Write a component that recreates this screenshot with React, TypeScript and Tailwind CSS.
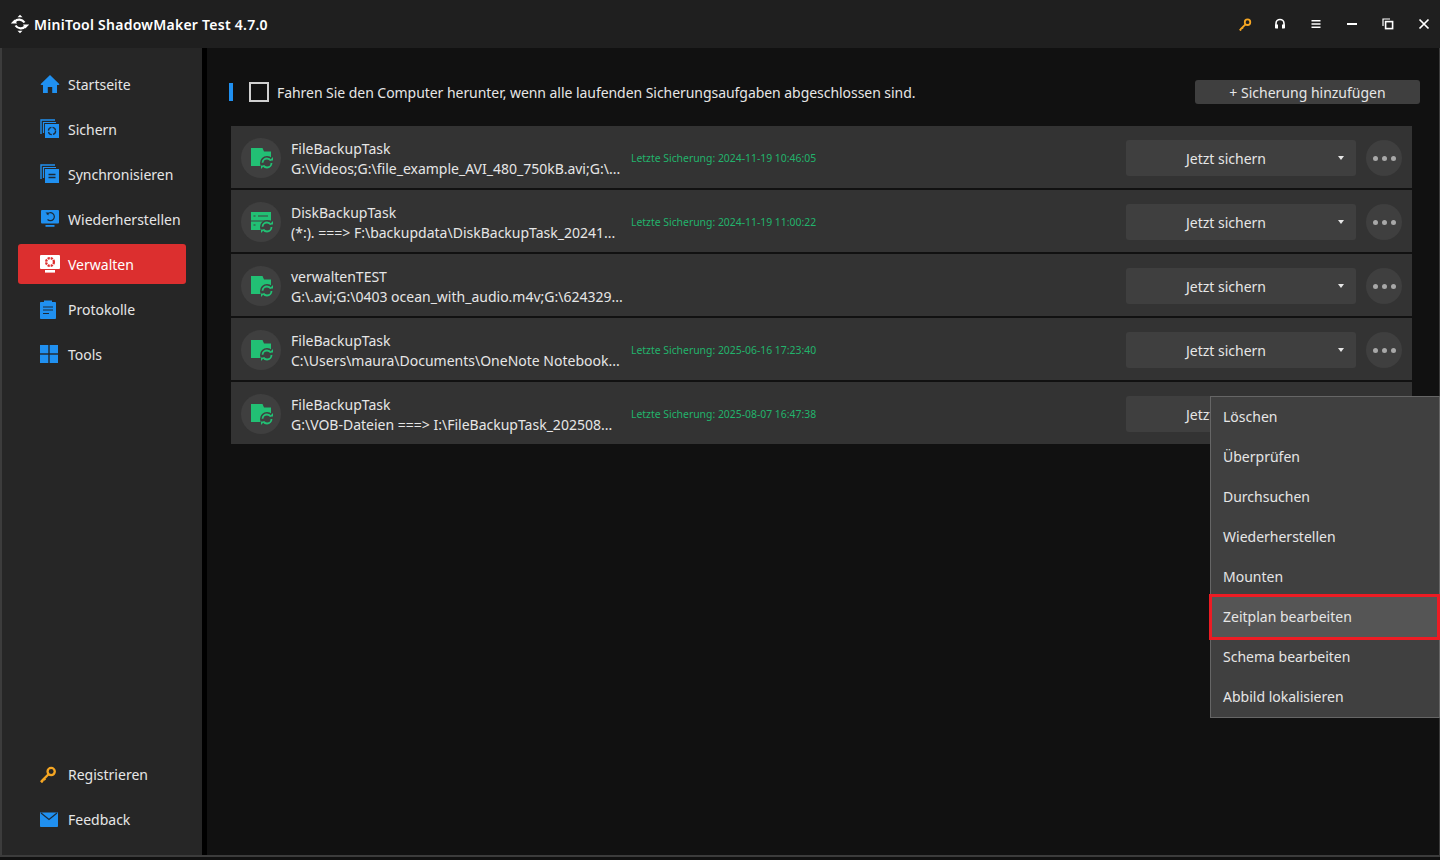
import type { ReactNode } from "react";

const Blue = "#2090f0";
const Green = "#22c074";

const Logo = () => (
  <svg width="20" height="20" viewBox="0 0 20 20" fill="none">
    <path d="M7.5 3.2L10 .8L12.5 3.2Z" fill="#fff" />
    <path d="M7.5 16.8L10 19.2L12.5 16.8Z" fill="#fff" />
    <path d="M5 7.5C7 4.8 12 4.8 14.5 8.5" stroke="#fff" strokeWidth="2.2" />
    <path d="M15 12.5C13 15.2 8 15.2 5.5 11.5" stroke="#fff" strokeWidth="2.2" />
    <path d="M.8 9.6L4.6 5.4L7 9.6Z" fill="#fff" />
    <path d="M19.2 10.4L15.4 14.6L13 10.4Z" fill="#fff" />
  </svg>
);

const HomeIcon = () => (
  <svg width="20" height="20" viewBox="0 0 20 20">
    <path d="M10 1L19.5 10.2L18.6 11H17V19H12.2V13H7.8V19H3V11H1.4L.5 10.2Z" fill={Blue} />
  </svg>
);

const StackIcon = ({ children }: { children: ReactNode }) => (
  <svg width="20" height="20" viewBox="0 0 20 20" fill="none">
    <path d="M1 15V1H15" stroke={Blue} strokeWidth="1.4" />
    <path d="M3.5 14V3.5H16" stroke={Blue} strokeWidth="1.2" />
    <rect x="5" y="5" width="14" height="14" fill={Blue} />
    {children}
  </svg>
);

const RestoreIcon = () => (
  <svg width="20" height="20" viewBox="0 0 20 20" fill="none">
    <rect x="1" y="1" width="18" height="13.5" rx="1" fill={Blue} />
    <rect x="5.5" y="16" width="9" height="1.8" fill={Blue} />
    <path d="M7 5.5A4 4 0 1 1 7.5 10.5" stroke="#1c2a38" strokeWidth="1.2" />
    <path d="M5.5 3.5H8.5V6.5Z" fill="#1c2a38" />
  </svg>
);

const ManageIcon = () => (
  <svg width="22" height="20" viewBox="0 0 22 20" fill="none">
    <rect x="1" y="1" width="20" height="14" rx="1" fill="#fff" />
    <rect x="6" y="16" width="10" height="2.6" fill="#fff" />
    <circle cx="11" cy="8" r="3.9" stroke="#dc2f2f" strokeWidth="2.3" strokeDasharray="2.2 0.9" />
  </svg>
);

const LogIcon = () => (
  <svg width="16" height="19" viewBox="0 0 16 19" fill="none">
    <path d="M1 2H4V0.5H12V2H15C15.5 2 16 2.4 16 3V18C16 18.6 15.5 19 15 19H1C.5 19 0 18.6 0 18V3C0 2.4.5 2 1 2Z" fill={Blue} />
    <path d="M3 7H13M3 10H13M3 13.5H9" stroke="#1c2a38" strokeWidth="1.1" />
  </svg>
);

const ToolsIcon = () => (
  <svg width="18" height="18" viewBox="0 0 18 18">
    <rect width="8.3" height="8.3" fill={Blue} />
    <rect x="9.7" width="8.3" height="8.3" fill={Blue} />
    <rect y="9.7" width="8.3" height="8.3" fill={Blue} />
    <rect x="9.7" y="9.7" width="8.3" height="8.3" fill={Blue} />
  </svg>
);

const KeyIcon = ({ size = 16 }: { size?: number }) => (
  <svg width={size} height={size} viewBox="0 0 16 16" fill="none">
    <circle cx="10.5" cy="5.2" r="3.4" stroke="#f5a623" strokeWidth="2.2" />
    <path d="M8 7.8L2 13.8M2.6 15.4L.8 13.6M5 13.2L3.4 11.6" stroke="#f5a623" strokeWidth="2.2" />
  </svg>
);

const MailIcon = () => (
  <svg width="18" height="15" viewBox="0 0 18 15">
    <path d="M0 .5H18V14C18 14.5 17.6 15 17 15H1C.4 15 0 14.5 0 14Z" fill={Blue} />
    <path d="M1 1L9 7.5L17 1" stroke="#1c2a38" strokeWidth="1.2" fill="none" />
  </svg>
);

const SyncBadge = () => (
  <>
    <circle cx="16" cy="15" r="7" fill="#3f3f3f" />
    <circle cx="16" cy="15" r="4.5" stroke={Green} strokeWidth="1.8" strokeDasharray="11 3.1" fill="none" />
    <path d="M18.6 12.4H22V9Z" fill={Green} />
    <path d="M13.4 17.6H10V21Z" fill={Green} />
  </>
);

const FolderIcon = () => (
  <svg width="24" height="22" viewBox="0 0 24 22">
    <path d="M0 0H11.5L13 3.5H20V18H0Z" fill={Green} />
    <SyncBadge />
  </svg>
);

const DiskIcon = () => (
  <svg width="24" height="22" viewBox="0 0 24 22">
    <rect y="0" width="20" height="8.5" fill={Green} />
    <rect y="9.5" width="20" height="8.5" fill={Green} />
    <path d="M7 4H17M2.5 4H4.5M2.5 13H4.5" stroke="#3f3f3f" strokeWidth="1" />
    <SyncBadge />
  </svg>
);

const WinIcons = () => (
  <div className="flex items-center gap-[20px] pr-[8px]">
    <KeyIcon size={13} />
    <svg width="16" height="16" viewBox="0 0 16 16" fill="none">
      <path d="M4 9V7.5A4 4 0 0 1 12 7.5V9" stroke="#fff" strokeWidth="1.6" />
      <path d="M3 8.5H6V12.5H4C3.4 12.5 3 12.1 3 11.5ZM13 8.5H10V12.5H12C12.6 12.5 13 12.1 13 11.5Z" fill="#fff" />
    </svg>
    <svg width="16" height="16" viewBox="0 0 16 16">
      <path d="M3.5 4H12.5V5.6H3.5ZM3.5 7.2H12.5V8.8H3.5ZM3.5 10.4H12.5V12H3.5Z" fill="#fff" />
    </svg>
    <svg width="16" height="16" viewBox="0 0 16 16">
      <rect x="3" y="7" width="10" height="2" fill="#fff" />
    </svg>
    <svg width="16" height="16" viewBox="0 0 16 16" fill="none">
      <path d="M3 10V3H10" stroke="#fff" strokeWidth="1.2" />
      <rect x="5.6" y="5.6" width="7" height="7" stroke="#fff" strokeWidth="1.6" />
    </svg>
    <svg width="16" height="16" viewBox="0 0 16 16" fill="none">
      <path d="M3.5 3.5L12.5 12.5M12.5 3.5L3.5 12.5" stroke="#fff" strokeWidth="1.7" />
    </svg>
  </div>
);

const topNav = [
  { label: "Startseite", icon: <HomeIcon /> },
  {
    label: "Sichern",
    icon: (
      <StackIcon>
        <circle cx="12" cy="12" r="3.6" stroke="#1c2a38" strokeWidth="1.3" strokeDasharray="4.5 1.2" />
      </StackIcon>
    ),
  },
  {
    label: "Synchronisieren",
    icon: (
      <StackIcon>
        <path d="M8.5 10.5H15.5M8.5 13.5H15.5" stroke="#1c2a38" strokeWidth="1.3" />
      </StackIcon>
    ),
  },
  { label: "Wiederherstellen", icon: <RestoreIcon /> },
  { label: "Verwalten", icon: <ManageIcon />, active: true },
  { label: "Protokolle", icon: <LogIcon /> },
  { label: "Tools", icon: <ToolsIcon /> },
];

const tasks = [
  { name: "FileBackupTask", path: "G:\\Videos;G:\\file_example_AVI_480_750kB.avi;G:\\...", last: "2024-11-19 10:46:05", disk: false },
  { name: "DiskBackupTask", path: "(*:). ===> F:\\backupdata\\DiskBackupTask_20241...", last: "2024-11-19 11:00:22", disk: true },
  { name: "verwaltenTEST", path: "G:\\.avi;G:\\0403 ocean_with_audio.m4v;G:\\624329...", last: "", disk: false },
  { name: "FileBackupTask", path: "C:\\Users\\maura\\Documents\\OneNote Notebook...", last: "2025-06-16 17:23:40", disk: false },
  { name: "FileBackupTask", path: "G:\\VOB-Dateien ===> I:\\FileBackupTask_202508...", last: "2025-08-07 16:47:38", disk: false },
];

const menuItems = [
  "Löschen",
  "Überprüfen",
  "Durchsuchen",
  "Wiederherstellen",
  "Mounten",
  "Zeitplan bearbeiten",
  "Schema bearbeiten",
  "Abbild lokalisieren",
];

const NavItem = ({ label, icon, active }: { label: string; icon: ReactNode; active?: boolean }) => (
  <div
    className={
      active
        ? "ml-[16px] flex h-[40px] w-[168px] items-center rounded-[3px] bg-[#dc2f2f] pl-[21px] text-white"
        : "ml-[16px] flex h-[40px] w-[168px] items-center pl-[22px] text-[#e6e6e6]"
    }
  >
    <span className={active ? "flex w-[29px] shrink-0 items-center" : "flex w-[28px] shrink-0 items-center"}>{icon}</span>
    <span className="text-[14px]">{label}</span>
  </div>
);

const TaskRow = ({ name, path, last, disk }: { name: string; path: string; last: string; disk: boolean }) => (
  <div className="flex h-[62px] items-center bg-[#333333] px-[10px] pt-[2px]">
    <div className="flex h-[40px] w-[40px] shrink-0 items-center justify-center rounded-full bg-[#3f3f3f] pl-[4px] pt-[2px]">
      {disk ? <DiskIcon /> : <FolderIcon />}
    </div>
    <div className="ml-[10px] mt-[2px] w-[340px] shrink-0 whitespace-nowrap text-[14px] leading-[20px] text-[#e6e6e6]">
      <div>{name}</div>
      <div>{path}</div>
    </div>
    <div className="mt-[2px] flex-1 whitespace-nowrap text-[10.4px] text-[#22b36c]">
      {last ? `Letzte Sicherung: ${last}` : ""}
    </div>
    <div className="relative flex h-[36px] w-[230px] items-center justify-center rounded-[3px] bg-[#3f3f3f] pr-[30px] text-[14px] text-[#e6e6e6]">
      Jetzt sichern
      <span className="absolute right-[12px] top-[16px] h-0 w-0 border-x-[3px] border-t-[4px] border-x-transparent border-t-[#e6e6e6]" />
    </div>
    <div className="ml-[10px] flex h-[36px] w-[36px] items-center justify-center gap-[4px] rounded-full bg-[#3f3f3f]">
      <span className="h-[5px] w-[5px] rounded-full bg-[#a8a8a8]" />
      <span className="h-[5px] w-[5px] rounded-full bg-[#a8a8a8]" />
      <span className="h-[5px] w-[5px] rounded-full bg-[#a8a8a8]" />
    </div>
  </div>
);

export default function App() {
  return (
    <div className="relative flex h-[860px] w-[1440px] flex-col overflow-hidden bg-[#111111] font-['Noto_Sans',sans-serif]">
      <header className="flex h-[48px] shrink-0 items-center justify-between bg-[#1f1f1f] pl-[10px]">
        <div className="flex items-center gap-[4px]">
          <Logo />
          <span className="text-[14px] font-semibold tracking-[0.26px] text-white">MiniTool ShadowMaker Test 4.7.0</span>
        </div>
        <WinIcons />
      </header>

      <div className="flex h-[807px] shrink-0">
        <aside className="flex w-[202px] shrink-0 flex-col justify-between border-l-[2px] border-[#3c3c3c] bg-[#262626] pb-[16px] pt-[16px]">
          <nav className="flex flex-col gap-[5px]">
            {topNav.map((item) => (
              <NavItem key={item.label} label={item.label} icon={item.icon} active={item.active} />
            ))}
          </nav>
          <nav className="flex flex-col gap-[5px]">
            <NavItem label="Registrieren" icon={<KeyIcon size={17} />} />
            <NavItem label="Feedback" icon={<MailIcon />} />
          </nav>
        </aside>
        <div className="w-[5px] shrink-0 bg-black" />

        <main className="flex-1 border-r border-[#3c3c3c] pl-[22px] pt-[31px]">
          <div className="flex h-[26px] items-center">
            <span className="h-[18px] w-[4px] bg-[#2090f0]" />
            <span className="ml-[16px] h-[20px] w-[20px] border-2 border-[#d0d0d0]" />
            <span className="ml-[8px] text-[14px] tracking-[-0.05px] text-[#e6e6e6]">
              Fahren Sie den Computer herunter, wenn alle laufenden Sicherungsaufgaben abgeschlossen sind.
            </span>
            <button
              type="button"
              className="ml-auto mr-[19px] flex h-[24px] w-[225px] items-center justify-center rounded-[3px] bg-[#3f3f3f] text-[14px] text-[#e6e6e6]"
            >
              + Sicherung hinzufügen
            </button>
          </div>
          <div className="ml-[2px] mr-[27px] mt-[21px] flex flex-col gap-[2px]">
            {tasks.map((t, i) => (
              <TaskRow key={i} {...t} />
            ))}
          </div>
        </main>
      </div>
      <div className="h-[2px] shrink-0 bg-[#3c3c3c]" />

      <div className="absolute left-[1210px] top-[396px] w-[230px] border border-[#666666] bg-[#404040]">
        {menuItems.map((m) => (
          <div
            key={m}
            className={
              m === "Zeitplan bearbeiten"
                ? "relative flex h-[40px] items-center bg-[#555555] pb-[2px] pl-[12px] text-[14px] text-[#e6e6e6]"
                : "flex h-[40px] items-center pb-[2px] pl-[12px] text-[14px] text-[#e6e6e6]"
            }
          >
            {m}
            {m === "Zeitplan bearbeiten" && (
              <span className="absolute -left-[2px] -right-[1px] -top-[3px] -bottom-[3px] border-[3px] border-[#ed1c24]" />
            )}
          </div>
        ))}
      </div>
    </div>
  );
}
